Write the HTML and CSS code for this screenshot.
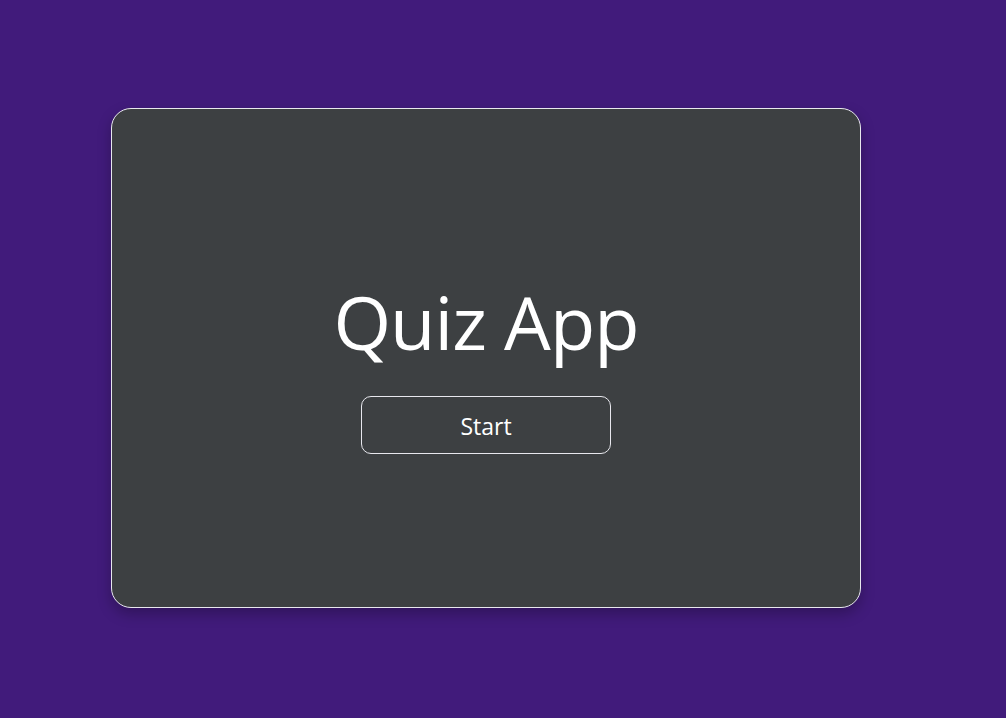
FILE: index.html
```html
<!DOCTYPE html>
<html lang="en">
<head>
<meta charset="utf-8">
<title>Quiz App</title>
<link rel="stylesheet" href="styles.css">
</head>
<body>
<main class="stage">
  <section class="card">
    <h1 class="title">Quiz App</h1>
    <button class="start-btn" type="button">Start</button>
  </section>
</main>
</body>
</html>
```

FILE: styles.css
```css
* { box-sizing: border-box; }
html, body {
  margin: 0;
  height: 100%;
}
body {
  background: #411b7b;
  font-family: "Open Sans", "Noto Sans", sans-serif;
  color: #ffffff;
}
.stage {
  height: 100%;
  display: flex;
  align-items: center;
  padding-left: 111px;
  padding-bottom: 2px;
}
.card {
  width: 750px;
  height: 500px;
  background: #3d4042;
  border: 1px solid #e8e8ee;
  border-radius: 20px;
  box-shadow: 0 6px 14px rgba(0, 0, 0, 0.25);
  display: flex;
  flex-direction: column;
  align-items: center;
  justify-content: center;
  padding-top: 23px;
}
.title {
  margin: 0 0 37px;
  font-size: 74px;
  font-weight: 400;
  line-height: 1;
  letter-spacing: -1px;
}
.start-btn {
  width: 250px;
  height: 58px;
  padding-top: 3px;
  background: transparent;
  border: 1px solid #e8e8ee;
  border-radius: 10px;
  color: #ffffff;
  font-family: "Open Sans", "Noto Sans", sans-serif;
  font-size: 23px;
  cursor: pointer;
}
```
